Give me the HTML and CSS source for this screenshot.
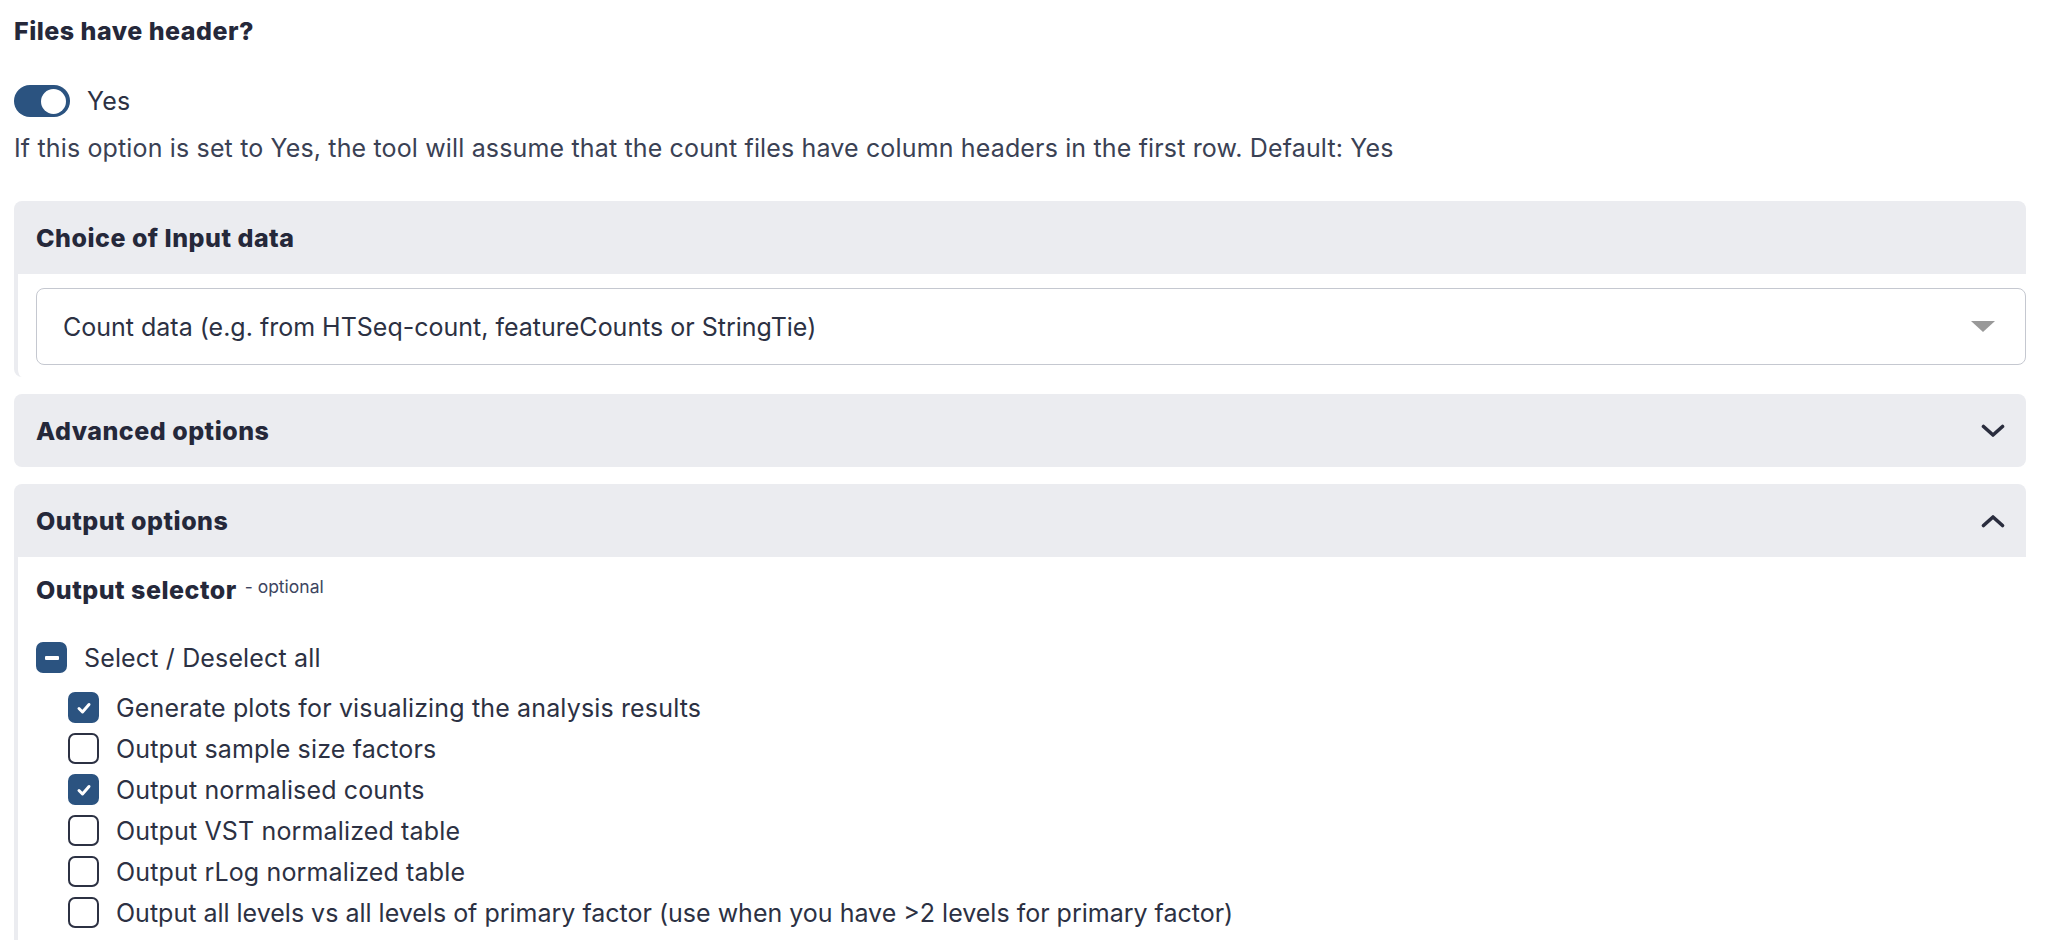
FILE: index.html
```html
<!DOCTYPE html>
<html lang="en">
<head>
<meta charset="utf-8">
<title>Tool form</title>
<link rel="stylesheet" href="styles.css">
</head>
<body>
<div class="page">
  <div class="field">
    <div class="field-title">Files have header?</div>
    <div class="switch-row">
      <span class="switch"><span class="knob"></span></span>
      <span class="switch-label">Yes</span>
    </div>
    <div class="help">If this option is set to Yes, the tool will assume that the count files have column headers in the first row. Default: Yes</div>
  </div>

  <div class="section">
    <div class="section-head"><span>Choice of Input data</span></div>
    <div class="section-body">
      <div class="select">
        <span class="select-text">Count data (e.g. from HTSeq-count, featureCounts or StringTie)</span>
        <span class="caret"></span>
      </div>
    </div>
  </div>

  <div class="section">
    <div class="section-head closed">
      <span>Advanced options</span>
      <svg class="chev" width="24" height="14" viewBox="0 0 24 14"><path d="M2.5 2.5 L12 11 L21.5 2.5" fill="none" stroke="#2a2d3e" stroke-width="3.6" stroke-linecap="round" stroke-linejoin="round"/></svg>
    </div>
  </div>

  <div class="section">
    <div class="section-head">
      <span>Output options</span>
      <svg class="chev" width="24" height="14" viewBox="0 0 24 14"><path d="M2.5 11.5 L12 3 L21.5 11.5" fill="none" stroke="#2a2d3e" stroke-width="3.6" stroke-linecap="round" stroke-linejoin="round"/></svg>
    </div>
    <div class="section-body output-body">
      <div class="sel-title">Output selector <span class="opt">- optional</span></div>
      <div class="check-row all"><span class="cb indet"><span class="bar"></span></span><span>Select / Deselect all</span></div>
      <div class="check-list">
        <div class="check-row"><span class="cb on"><svg width="16" height="14" viewBox="0 0 16 14"><path d="M3 7.5 L6.5 11 L13 3.5" fill="none" stroke="#fff" stroke-width="3" stroke-linecap="round" stroke-linejoin="round"/></svg></span><span>Generate plots for visualizing the analysis results</span></div>
        <div class="check-row"><span class="cb"></span><span>Output sample size factors</span></div>
        <div class="check-row"><span class="cb on"><svg width="16" height="14" viewBox="0 0 16 14"><path d="M3 7.5 L6.5 11 L13 3.5" fill="none" stroke="#fff" stroke-width="3" stroke-linecap="round" stroke-linejoin="round"/></svg></span><span>Output normalised counts</span></div>
        <div class="check-row"><span class="cb"></span><span>Output VST normalized table</span></div>
        <div class="check-row"><span class="cb"></span><span>Output rLog normalized table</span></div>
        <div class="check-row"><span class="cb"></span><span class="long-label">Output all levels vs all levels of primary factor (use when you have &gt;2 levels for primary factor)</span></div>
      </div>
    </div>
  </div>
</div>
</body>
</html>
```
FILE: styles.css
```css
html, body {
  margin: 0;
  padding: 0;
  background: #ffffff;
}
body {
  font-family: Inter, "Noto Sans", "Liberation Sans", sans-serif;
  font-size: 25px;
  letter-spacing: 0.15px;
  line-height: 36px;
  color: #2c3143;
  overflow: hidden;
}
.page {
  padding: 13px 20px 0 14px;
}
.field-title,
.section-head,
.sel-title {
  font-weight: 800;
  letter-spacing: 0.5px;
  color: #25283a;
}
.switch-row {
  display: flex;
  align-items: center;
  gap: 17px;
  height: 32px;
  margin-top: 36px;
}
.switch {
  width: 56px;
  height: 32px;
  border-radius: 16px;
  background: #2b5380;
  display: flex;
  align-items: center;
  justify-content: flex-end;
  padding-right: 4px;
  box-sizing: border-box;
}
.knob {
  width: 25px;
  height: 25px;
  border-radius: 50%;
  background: #ffffff;
}
.help {
  margin-top: 13px;
  color: #3a4154;
}
.section {
  margin-top: 17px;
}
.field + .section {
  margin-top: 35px;
}
.section-head {
  height: 73px;
  background: #ebecf0;
  border-radius: 8px 8px 0 0;
  display: flex;
  align-items: center;
  justify-content: space-between;
  padding: 0 21px 0 22px;
}
.section-head.closed {
  border-radius: 8px;
}
.section-body {
  border-left: 4px solid #ebecf0;
  border-bottom-left-radius: 8px;
  padding: 14px 0 12px 18px;
}
.select {
  height: 77px;
  box-sizing: border-box;
  border: 1.5px solid #c5c8d0;
  border-radius: 8px;
  display: flex;
  align-items: center;
  justify-content: space-between;
  padding: 0 30px 0 26px;
  color: #2c3143;
}
.select-text {
  letter-spacing: 0;
}
.caret {
  width: 0;
  height: 0;
  border-left: 12px solid transparent;
  border-right: 12px solid transparent;
  border-top: 11px solid #999999;
}
.output-body {
  padding-top: 12px;
  padding-bottom: 20px;
}
.opt {
  font-weight: 400;
  font-size: 17.5px;
  letter-spacing: 0;
  color: #3d4560;
  vertical-align: 6px;
  margin-left: 2px;
}
.check-row {
  display: flex;
  align-items: center;
  gap: 17px;
  height: 31px;
}
.check-row.all {
  margin-top: 34px;
}
.long-label {
  letter-spacing: 0;
}
.check-list {
  display: flex;
  flex-direction: column;
  gap: 10px;
  margin-top: 19px;
  padding-left: 32px;
}
.cb {
  width: 31px;
  height: 31px;
  box-sizing: border-box;
  border: 2px solid #2c3143;
  border-radius: 7px;
  background: #fff;
  display: flex;
  align-items: center;
  justify-content: center;
  flex: none;
}
.cb.on, .cb.indet {
  background: #2b5380;
  border-color: #2b5380;
}
.bar {
  width: 14px;
  height: 4px;
  background: #fff;
  border-radius: 1px;
}
```
